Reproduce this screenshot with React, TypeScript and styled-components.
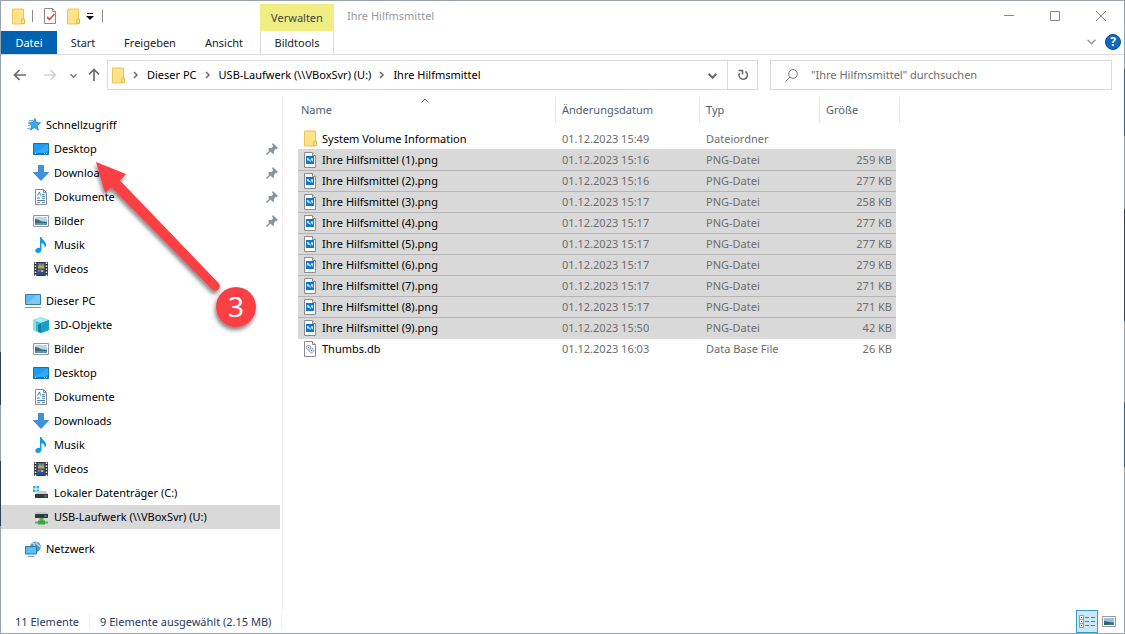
import React from 'react';
import styled, { createGlobalStyle, css } from 'styled-components';

const FONT = '"Noto Sans", "Open Sans", sans-serif';

const GlobalStyle = createGlobalStyle`
  *, *::before, *::after { box-sizing: border-box; }
  body { margin: 0; background: #fff; font: 11px/16px ${FONT}; color: #111; }
  button, input { font: inherit; color: inherit; }
  svg { display: block; flex: none; }
`;

const Desktop = styled.div`
  position: relative;
  min-height: 100vh;
  padding: 1px;
  display: flex;
  background:
    linear-gradient(#99a3ab, #99a3ab) top / 100% 1px no-repeat,
    linear-gradient(#99a3ab, #99a3ab) bottom / 100% 1px no-repeat,
    linear-gradient(#99a3ab 352px, #2b4258 352px 405px, #99a3ab 405px 461px, #2b4258 461px 526px, #99a3ab 526px) left / 1px 100% no-repeat,
    linear-gradient(#99a3ab 69px, #35617f 69px 136px, #99a3ab 136px 209px, #2b4258 209px 321px, #99a3ab 321px 402px, #35617f 402px 467px, #99a3ab 467px) right / 1px 100% no-repeat;
`;

const Window = styled.main`
  flex: 1;
  min-width: 0;
  display: flex;
  flex-direction: column;
  background: #fff;
`;

const Ribbon = styled.header`
  display: flex;
  height: 54px;
  border-bottom: 1px solid #dadbdc;
`;

const RibbonLeft = styled.div`
  display: flex;
  flex-direction: column;
  width: 259px;
`;

const QuickAccess = styled.div`
  display: flex;
  align-items: center;
  height: 30px;
  padding-left: 9px;
`;

const QuickIcon = styled.button<{ $w: number }>`
  display: flex;
  align-items: center;
  justify-content: center;
  width: ${(p) => p.$w}px;
  height: 22px;
  padding: 0;
  border: 0;
  background: none;
`;

const QuickLine = styled.span<{ $gap: number }>`
  width: 1px;
  height: 12px;
  margin-left: ${(p) => p.$gap}px;
  background: #8a8a8a;
`;

const Tabs = styled.nav`
  display: flex;
`;

const Tab = styled.button<{ $w: number; $active?: boolean }>`
  width: ${(p) => p.$w}px;
  height: 23px;
  padding: 1px 0 0;
  border: 0;
  background: ${(p) => (p.$active ? '#0063b1' : 'none')};
  color: ${(p) => (p.$active ? '#fff' : '#222')};
`;

const ContextTabs = styled.div`
  display: flex;
  flex-direction: column;
  width: 74px;
  padding-top: 3px;
`;

const ContextTitle = styled.div`
  height: 27px;
  padding-top: 6px;
  text-align: center;
  background: #f0ee83;
  color: #444;
`;

const ContextTab = styled.button`
  height: 23px;
  padding: 1px 0 0;
  border: solid #dcdcdc;
  border-width: 0 1px;
  background: #fff;
  color: #222;
`;

const WindowTitle = styled.h1`
  flex: 1;
  margin: 0;
  padding: 7px 0 0 13px;
  font-size: 11px;
  line-height: 16px;
  font-weight: 400;
  color: #999;
`;

const WindowSide = styled.div`
  display: flex;
  flex-direction: column;
  align-items: flex-end;
`;

const Controls = styled.div`
  display: flex;
`;

const ControlButton = styled.button`
  display: grid;
  place-items: center;
  width: 46px;
  height: 29px;
  padding: 0;
  border: 0;
  background: none;
`;

const HelpRow = styled.div`
  display: flex;
  align-items: center;
  gap: 9px;
  height: 23px;
  padding-right: 3px;
`;

const PlainButton = styled.button`
  display: grid;
  place-items: center;
  padding: 0;
  border: 0;
  background: none;
`;

const HelpButton = styled(PlainButton)`
  width: 16px;
  height: 16px;
  border: 1px solid #084c8a;
  border-radius: 50%;
  background: #0a69c4;
  color: #fff;
  font-size: 12px;
  font-weight: 700;
  line-height: 14px;
`;

const AddressRow = styled.div`
  display: flex;
  align-items: center;
  height: 40px;
  padding-right: 12px;
`;

const NavButtons = styled.div`
  display: flex;
  align-items: center;
  flex: none;
  width: 106px;
  padding-left: 12px;
`;

const NavButton = styled(PlainButton)<{ $gap?: number }>`
  margin-left: ${(p) => p.$gap ?? 0}px;
`;

const AddressBox = styled.div`
  flex: 649 1 0;
  min-width: 0;
  display: flex;
  align-items: center;
  height: 30px;
  border: 1px solid #d9d9d9;
`;

const Crumbs = styled.ol`
  flex: 1;
  display: flex;
  align-items: center;
  gap: 7px;
  margin: 0;
  padding: 0 0 0 3px;
  list-style: none;
  white-space: nowrap;
`;

const Crumb = styled.li`
  display: flex;
  align-items: center;
  gap: 7px;
`;

const CrumbLink = styled.a`
  color: #000;
  text-decoration: none;
`;

const BoxButton = styled(PlainButton)<{ $line?: boolean }>`
  width: 30px;
  height: 28px;
  border-left: ${(p) => (p.$line ? '1px solid #d9d9d9' : '0')};
`;

const SearchBox = styled.label`
  flex: 326 1 0;
  min-width: 0;
  display: flex;
  align-items: center;
  gap: 13px;
  height: 30px;
  margin-left: 12px;
  padding-left: 14px;
  border: 1px solid #d9d9d9;
`;

const SearchInput = styled.input`
  flex: 1;
  min-width: 0;
  padding: 0;
  border: 0;
  outline: 0;
  background: none;
  &::placeholder { color: #6d6d6d; opacity: 1; }
`;

const Body = styled.div`
  flex: 1;
  display: flex;
`;

const Sidebar = styled.nav`
  flex: none;
  width: 282px;
  padding: 18px 2px 0 0;
  border-right: 1px solid #f3f3f3;
`;

const Group = styled.ul`
  margin: 0 0 8px;
  padding: 0;
  list-style: none;
`;

const SideItem = styled.li<{ $level: number; $selected?: boolean }>`
  display: flex;
  align-items: center;
  gap: 5px;
  height: 24px;
  padding: 0 2px 0 ${(p) => 24 + p.$level * 8}px;
  background: ${(p) => (p.$selected ? '#d9d9d9' : 'none')};
`;

const SideLink = styled.a`
  flex: 1;
  color: #000;
  text-decoration: none;
  white-space: nowrap;
`;

const Content = styled.section`
  flex: 1;
  padding: 2px 0 0 15px;
`;

const FileTable = styled.table`
  width: 598px;
  table-layout: fixed;
  border-collapse: separate;
  border-spacing: 0;
`;

const HeadCell = styled.th<{ $w: number; $first?: boolean; $last?: boolean }>`
  position: relative;
  width: ${(p) => p.$w}px;
  height: 26px;
  padding: 0 0 0 ${(p) => (p.$first ? 3 : 6)}px;
  border-left: ${(p) => (p.$first ? '0' : '1px solid #e5e5e5')};
  font-weight: 400;
  text-align: left;
  color: #4c607a;
  ${(p) =>
    p.$last &&
    css`
      &::after {
        content: '';
        position: absolute;
        top: 0;
        bottom: 0;
        left: 100%;
        width: 4px;
        border-right: 1px solid #e5e5e5;
      }
    `}
`;

const SortMark = styled.span`
  position: absolute;
  top: 0;
  left: 123px;
`;

const Spacer = styled.tr`
  height: 5px;
`;

const Row = styled.tr<{ $selected?: boolean; $line?: boolean }>`
  height: 21px;
  ${(p) =>
    p.$selected &&
    css`
      td {
        background: #d9d9d9;
        box-shadow: 0 1px 0 #d9d9d9${p.$line ? ', inset 0 1px 0 #b5b5b5' : ''};
      }
    `}
`;

const Cell = styled.td<{ $right?: boolean }>`
  padding: 1px 4px 0 7px;
  text-align: ${(p) => (p.$right ? 'right' : 'left')};
  color: #6d6d6d;
  white-space: nowrap;
`;

const NameCell = styled(Cell)`
  padding: 0 0 0 5px;
  color: #000;
`;

const NameInner = styled.div`
  display: flex;
  align-items: center;
  gap: 5px;
`;

const StatusBar = styled.footer`
  display: flex;
  align-items: center;
  height: 23px;
  padding: 0 4px 0 14px;
  color: #1f3a63;
`;

const StatusText = styled.span`
  padding-right: 10px;
  margin-right: 10px;
  border-right: 1px solid #eee;
`;

const ViewButtons = styled.div`
  display: flex;
  margin-left: auto;
`;

const ViewButton = styled.button<{ $active?: boolean }>`
  display: grid;
  place-items: center;
  width: 22px;
  height: 23px;
  padding: 0;
  border: 1px solid ${(p) => (p.$active ? '#3a9bc1' : 'transparent')};
  background: ${(p) => (p.$active ? '#cbe8f6' : 'none')};
`;

const Callout = styled.svg`
  position: absolute;
  top: 150px;
  left: 84px;
  pointer-events: none;
`;

/* ---------- icons ---------- */

const Folder = () => (
  <svg width="14" height="17" viewBox="0 0 14 17">
    <path d="M1.5 1h11v15h-11z" fill="#ffe28a" stroke="#ecc552" />
    <path d="M11 11h2.500v4.500h-3z" fill="#ffe694" stroke="#e2b93f" />
  </svg>
);

const Sheet = ({ children }: { children?: React.ReactNode }) => (
  <svg width="14" height="16" viewBox="0 0 14 16">
    <path d="M1.5.5h8l3 3v12h-11z" fill="#fff" stroke="#8b8b8b" />
    <path d="M9.500.5v3h3" fill="#eee" stroke="#8b8b8b" />
    {children}
  </svg>
);

const CheckSheet = () => (
  <Sheet>
    <path d="M4 9l2.500 2.500 5-5.500" fill="none" stroke="#e2562c" strokeWidth="1.800" />
  </Sheet>
);

const PngFile = () => (
  <Sheet>
    <path d="M3 4h8v8H3z" fill="#0b78d0" />
    <path d="M4 6h1.500l1 1.500L7.500 9l.5-2.500L9 6l1 .5v3.500L8.500 8l-1 2L6 8.500 5 9 4 7.500z" fill="#c4e6fb" />
  </Sheet>
);

const DbFile = () => (
  <Sheet>
    <circle cx="5.500" cy="6.500" r="2.200" fill="#e2ebf2" stroke="#8ea3b4" />
    <circle cx="8.500" cy="9.500" r="2.500" fill="#cfe0ee" stroke="#8096aa" strokeDasharray="2 1" />
    <path d="M5 6.500h1M8 9.500h1" stroke="#60788c" />
  </Sheet>
);

const Wide = ({ children }: { children: React.ReactNode }) => (
  <svg width="16" height="16" viewBox="0 0 16 16">
    {children}
  </svg>
);

const Star = () => (
  <Wide>
    <path d="M10 1.500l1.200 4 4.300.3-3.500 2.600 1.400 4.700-4-2.600-3.900 2.600 1.300-4.700-3.300-2.600 4.300-.3z" fill="#3da9e8" stroke="#1d7fc0" strokeWidth=".8" />
    <path d="M4 3.500h4M3 6h2M3 8.500h2.500M2.500 11.500h3" stroke="#5bb6ea" />
  </Wide>
);

const DesktopIcon = () => (
  <Wide>
    <path d="M.5 2.500h15v11H.5z" fill="#1e9bf5" stroke="#1b6fae" />
    <path d="M15 3v7L7 13H1v-1z" fill="#3cb0ff" opacity=".6" />
    <path d="M1 12.500h14" stroke="#1b6fae" />
    <path d="M2 12.500h1M11 12.500h1M13 12.500h1" stroke="#fff" />
  </Wide>
);

const Download = () => (
  <Wide>
    <path d="M5.500.5h5v7h5L8 15.500.5 7.500h5z" fill="#3b93df" stroke="#2f78bd" strokeWidth=".8" />
  </Wide>
);

const DocIcon = () => (
  <Wide>
    <path d="M2.500.5h8l3 3v12h-11z" fill="#fff" stroke="#8b8b8b" />
    <path d="M10.500.5v3h3" fill="none" stroke="#8b8b8b" />
    <path d="M4.500 6.500L6.500 3l1 3.500M9 5.500h2.500M9 7.500h3M4 9h3M4 11.500h8" fill="none" stroke="#2e86c4" />
    <path d="M9 9.500h3M4 13.500h3M9 13.500h3" stroke="#7c8b96" />
  </Wide>
);

const Picture = () => (
  <Wide>
    <path d="M.5 2.500h15v11H.5z" fill="#fff" stroke="#8f989e" />
    <path d="M2 4h12v8H2z" fill="#b7d9f2" />
    <path d="M2 6c3 0 5 2 8 2.500l4 .5v3H2z" fill="#3d6f72" />
    <path d="M2 10.500c4-1 8-1 12-.3V12H2z" fill="#5d93c0" />
  </Wide>
);

const Music = () => (
  <Wide>
    <path d="M7 0h1.500c.3 3 4.500 4 4.500 7.500 0 1.500-.6 2.800-1.500 3.500.5-2.500-.5-4-3-5v6.500c0 2-1.500 3.500-3.500 3.500-1.700 0-2.700-.9-2.700-2.200 0-1.800 2-3.300 4.700-2.900z" fill="#109be8" />
  </Wide>
);

const Video = () => (
  <Wide>
    <path d="M1 1h14v14H1z" fill="#30343a" />
    <path d="M2.500 1.500v14M13.500 1.500v14" stroke="#fff" strokeWidth="1.500" strokeDasharray="1.500 1.500" />
    <path d="M4.500 2h7v5.500h-7z" fill="#4b6fae" />
    <path d="M4.500 8.500h7V14h-7z" fill="#4d7ccc" />
    <path d="M5 6l2-3 1.500 2 2-2 1 4.500h-6z" fill="#c6a23b" />
    <path d="M4.500 12l3-2 1.500 1.500 2.500-2V14h-7z" fill="#2e4c86" />
    <path d="M8 9h2v2H8z" fill="#cdb06a" />
  </Wide>
);

const Monitor = () => (
  <Wide>
    <path d="M.5 1.500h15v10H.5z" fill="#5cbaf6" stroke="#3279ad" />
    <path d="M1 11L12 2h3v9z" fill="#8cd2fb" opacity=".7" />
    <path d="M0 14.500h16" stroke="#8a949c" />
  </Wide>
);

const Cube = () => (
  <Wide>
    <path d="M8 0l8 3v10l-8 3-8-3V3z" fill="#38bfd8" />
    <path d="M8 0l8 3-8 3-8-3z" fill="#a8ecf2" />
    <path d="M8 6l8-3v10l-8 3z" fill="#17a0c6" />
    <path d="M0 3l3 1v10l-3-1z" fill="#8adfe8" />
    <path d="M5 8l3-2v10l-3-1z" fill="#0f7fa8" />
  </Wide>
);

const Drive = () => (
  <Wide>
    <path d="M0 1h2.500v2.500H0zM3.500 1H6v2.500H3.500zM0 4.500h2.500V7H0zM3.500 4.500H6V7H3.500z" fill="#25aee0" />
    <path d="M2 9.500L4 6h9l2 3.500z" fill="#c9cdd0" />
    <path d="M2 9h13v4H2z" fill="#33383c" />
    <path d="M11.500 11h2" stroke="#4fe36c" />
  </Wide>
);

const NetDrive = () => (
  <Wide>
    <path d="M2 5l1.500-2h10L15 5z" fill="#c3c7ca" />
    <path d="M2 5h13v4H2z" fill="#33383c" />
    <path d="M11.500 7h2" stroke="#4fe36c" />
    <path d="M6.500 9h4v3.500h-4z" fill="#4db552" />
    <path d="M2 12.500h13v2H2z" fill="#4db552" />
    <path d="M5 11.500h7v4H5z" fill="#3ca342" />
  </Wide>
);

const Network = () => (
  <Wide>
    <circle cx="10.500" cy="5.800" r="5.300" fill="#5c93b8" />
    <path d="M7 2c2 0 3 1 2 3M11 1c0 3 3 3 4 5" stroke="#b7dbe9" strokeWidth="1.500" fill="none" />
    <path d="M.5 5.500h11v7.500H.5z" fill="#59bdf7" stroke="#2b79ae" />
    <path d="M3 15.500h6" stroke="#8a949c" />
  </Wide>
);

const Pin = () => (
  <svg width="12" height="12" viewBox="0 0 12 12">
    <path d="M7 0l5 5-1.200 1-.8-.3-2.200 2.200.3 2.200-1.200 1L2 6.200l1-1.200 2.200.3L7.300 3 6 1.200z" fill="#8793a0" />
    <path d="M.5 11.500l4-4" stroke="#8793a0" strokeWidth="1.500" />
  </svg>
);

const Chevron = ({ dir, size = 8, color = '#6b6b6b', weight = 1.5 }: { dir: 'right' | 'down' | 'up'; size?: number; color?: string; weight?: number }) => {
  const d = { right: 'M2 1l3 3-3 3', down: 'M.5 2.500L4 6l3.500-3.500', up: 'M.5 5.500L4 2l3.500 3.500' }[dir];
  return (
    <svg width={size} height={size} viewBox="0 0 8 8">
      <path d={d} fill="none" stroke={color} strokeWidth={(weight * 8) / size} />
    </svg>
  );
};

const Arrow = ({ turn = 0, color = '#6b6b6b' }: { turn?: number; color?: string }) => (
  <svg width="14" height="14" viewBox="0 0 14 14">
    <path d="M13 7H2M6.500 2L1.500 7l5 5" fill="none" stroke={color} strokeWidth="1.700" transform={`rotate(${turn} 7 7)`} />
  </svg>
);

/* ---------- data ---------- */

type Side = { label: string; icon: React.ReactNode; level: number; pin?: boolean; selected?: boolean };

const groups: Side[][] = [
  [
    { label: 'Schnellzugriff', icon: <Star />, level: 0 },
    { label: 'Desktop', icon: <DesktopIcon />, level: 1, pin: true },
    { label: 'Downloads', icon: <Download />, level: 1, pin: true },
    { label: 'Dokumente', icon: <DocIcon />, level: 1, pin: true },
    { label: 'Bilder', icon: <Picture />, level: 1, pin: true },
    { label: 'Musik', icon: <Music />, level: 1 },
    { label: 'Videos', icon: <Video />, level: 1 },
  ],
  [
    { label: 'Dieser PC', icon: <Monitor />, level: 0 },
    { label: '3D-Objekte', icon: <Cube />, level: 1 },
    { label: 'Bilder', icon: <Picture />, level: 1 },
    { label: 'Desktop', icon: <DesktopIcon />, level: 1 },
    { label: 'Dokumente', icon: <DocIcon />, level: 1 },
    { label: 'Downloads', icon: <Download />, level: 1 },
    { label: 'Musik', icon: <Music />, level: 1 },
    { label: 'Videos', icon: <Video />, level: 1 },
    { label: 'Lokaler Datenträger (C:)', icon: <Drive />, level: 1 },
    { label: 'USB-Laufwerk (\\\\VBoxSvr) (U:)', icon: <NetDrive />, level: 1, selected: true },
  ],
  [{ label: 'Netzwerk', icon: <Network />, level: 0 }],
];

const pngs: [string, string][] = [
  ['15:16', '259 KB'],
  ['15:16', '277 KB'],
  ['15:17', '258 KB'],
  ['15:17', '277 KB'],
  ['15:17', '277 KB'],
  ['15:17', '279 KB'],
  ['15:17', '271 KB'],
  ['15:17', '271 KB'],
  ['15:50', '42 KB'],
];

const files = [
  { name: 'System Volume Information', icon: <Folder />, date: '01.12.2023 15:49', type: 'Dateiordner', size: '', selected: false },
  ...pngs.map(([time, size], i) => ({
    name: `Ihre Hilfsmittel (${i + 1}).png`,
    icon: <PngFile />,
    date: `01.12.2023 ${time}`,
    type: 'PNG-Datei',
    size,
    selected: true,
  })),
  { name: 'Thumbs.db', icon: <DbFile />, date: '01.12.2023 16:03', type: 'Data Base File', size: '26 KB', selected: false },
];

const crumbs = ['Dieser PC', 'USB-Laufwerk (\\\\VBoxSvr) (U:)', 'Ihre Hilfmsmittel'];

export default function App() {
  return (
    <Desktop>
      <GlobalStyle />
      <Window>
        <Ribbon>
          <RibbonLeft>
            <QuickAccess>
              <QuickIcon $w={15} aria-label="Ordner"><Folder /></QuickIcon>
              <QuickLine $gap={7} />
              <QuickIcon $w={34} aria-label="Eigenschaften"><CheckSheet /></QuickIcon>
              <QuickIcon $w={12} aria-label="Neuer Ordner"><Folder /></QuickIcon>
              <QuickIcon $w={22} aria-label="Anpassen">
                <svg width="8" height="8" viewBox="0 0 8 8">
                  <path d="M1 1.500h6" stroke="#111" />
                  <path d="M0 4h8L4 8z" fill="#111" />
                </svg>
              </QuickIcon>
              <QuickLine $gap={1} />
            </QuickAccess>
            <Tabs>
              <Tab $w={56} $active>Datei</Tab>
              <Tab $w={52}>Start</Tab>
              <Tab $w={82}>Freigeben</Tab>
              <Tab $w={66}>Ansicht</Tab>
            </Tabs>
          </RibbonLeft>
          <ContextTabs>
            <ContextTitle>Verwalten</ContextTitle>
            <ContextTab>Bildtools</ContextTab>
          </ContextTabs>
          <WindowTitle>Ihre Hilfmsmittel</WindowTitle>
          <WindowSide>
            <Controls>
              <ControlButton aria-label="Minimieren">
                <svg width="10" height="10" viewBox="0 0 10 10"><path d="M0 4.500h10" stroke="#888" /></svg>
              </ControlButton>
              <ControlButton aria-label="Maximieren">
                <svg width="10" height="10" viewBox="0 0 10 10"><path d="M.5.500h9v9h-9z" fill="none" stroke="#888" /></svg>
              </ControlButton>
              <ControlButton aria-label="Schließen">
                <svg width="10" height="10" viewBox="0 0 10 10"><path d="M0 0l10 10M10 0L0 10" stroke="#888" /></svg>
              </ControlButton>
            </Controls>
            <HelpRow>
              <PlainButton aria-label="Menüband erweitern"><Chevron dir="down" size={9} color="#999" /></PlainButton>
              <HelpButton aria-label="Hilfe">?</HelpButton>
            </HelpRow>
          </WindowSide>
        </Ribbon>

        <AddressRow>
          <NavButtons>
            <NavButton aria-label="Zurück"><Arrow /></NavButton>
            <NavButton $gap={16} aria-label="Vorwärts"><Arrow turn={180} color="#d2d2d2" /></NavButton>
            <NavButton $gap={13} aria-label="Verlauf"><Chevron dir="down" size={7} color="#777" /></NavButton>
            <NavButton $gap={10} aria-label="Nach oben"><Arrow turn={90} /></NavButton>
          </NavButtons>
          <AddressBox>
            <Crumbs>
              <li><Folder /></li>
              {crumbs.map((c) => (
                <Crumb key={c}>
                  <Chevron dir="right" />
                  <CrumbLink href="#">{c}</CrumbLink>
                </Crumb>
              ))}
            </Crumbs>
            <BoxButton aria-label="Frühere Orte"><Chevron dir="down" size={9} weight={2} /></BoxButton>
            <BoxButton $line aria-label="Aktualisieren">
              <svg width="12" height="12" viewBox="0 0 12 12">
                <path d="M8.500 2.500a4.200 4.200 0 1 1-6 1.500" fill="none" stroke="#6b6b6b" strokeWidth="1.600" />
                <path d="M1.500 1.500h4v4" fill="none" stroke="#6b6b6b" strokeWidth="1.600" />
              </svg>
            </BoxButton>
          </AddressBox>
          <SearchBox>
            <svg width="13" height="13" viewBox="0 0 13 13">
              <circle cx="8" cy="5" r="4.300" fill="none" stroke="#777" />
              <path d="M5 8L.5 12.500" stroke="#777" />
            </svg>
            <SearchInput type="search" aria-label="Suchen" placeholder={'"Ihre Hilfmsmittel" durchsuchen'} />
          </SearchBox>
        </AddressRow>

        <Body>
          <Sidebar>
            {groups.map((items, g) => (
              <Group key={g}>
                {items.map((it) => (
                  <SideItem key={it.label} $level={it.level} $selected={it.selected}>
                    {it.icon}
                    <SideLink href="#">{it.label}</SideLink>
                    {it.pin && <Pin />}
                  </SideItem>
                ))}
              </Group>
            ))}
          </Sidebar>
          <Content>
            <FileTable>
              <thead>
                <tr>
                  <HeadCell $w={257} $first>
                    Name
                    <SortMark><Chevron dir="up" weight={1} /></SortMark>
                  </HeadCell>
                  <HeadCell $w={144}>Änderungsdatum</HeadCell>
                  <HeadCell $w={120}>Typ</HeadCell>
                  <HeadCell $w={77} $last>Größe</HeadCell>
                </tr>
              </thead>
              <tbody>
                <Spacer />
                {files.map((f, i) => (
                  <Row key={f.name} $selected={f.selected} $line={i > 1}>
                    <NameCell>
                      <NameInner>{f.icon}{f.name}</NameInner>
                    </NameCell>
                    <Cell>{f.date}</Cell>
                    <Cell>{f.type}</Cell>
                    <Cell $right>{f.size}</Cell>
                  </Row>
                ))}
              </tbody>
            </FileTable>
          </Content>
        </Body>

        <StatusBar>
          <StatusText>11 Elemente</StatusText>
          <StatusText>9 Elemente ausgewählt (2.15 MB)</StatusText>
          <ViewButtons>
            <ViewButton $active aria-label="Details">
              <svg width="16" height="13" viewBox="0 0 16 13">
                <path d="M.5.500h4v12h-4zM.5 4.500h4M.5 8.500h4" fill="#fff" stroke="#999" />
                <path d="M2 2.500h1M2 6.500h1M2 10.500h1" stroke="#333" />
                <path d="M6 2.500h4M12 2.500h4M6 6.500h4M12 6.500h4M6 10.500h4M12 10.500h4" stroke="#777" />
              </svg>
            </ViewButton>
            <ViewButton aria-label="Große Symbole">
              <svg width="14" height="11" viewBox="0 0 14 11">
                <path d="M.5.500h13v10H.5z" fill="#fff" stroke="#999" />
                <path d="M2 2h10v7H2z" fill="#8fc1ea" />
                <path d="M2 5c3 0 6 2 10 1.500V9H2z" fill="#2f6a5c" />
                <path d="M5 9l7-2v2z" fill="#3f78b8" />
              </svg>
            </ViewButton>
          </ViewButtons>
        </StatusBar>
      </Window>

      <Callout width="184" height="190" viewBox="84 150 184 190">
        <defs>
          <filter id="shade" x="-20%" y="-20%" width="140%" height="150%">
            <feDropShadow dx="-1" dy="3" stdDeviation="2" floodColor="#000" floodOpacity=".5" />
          </filter>
        </defs>
        <g filter="url(#shade)" fill="#fb4144">
          <path d="M96 162l30 12-6 6.500 98.500 102.500a4.500 4.500 0 0 1-6.500 6.500L111.500 187.500 105 193z" />
          <circle cx="236" cy="307" r="20" />
        </g>
        <text x="236" y="317" textAnchor="middle" fontFamily={FONT} fontSize="28" fill="#fff">3</text>
      </Callout>
    </Desktop>
  );
}
